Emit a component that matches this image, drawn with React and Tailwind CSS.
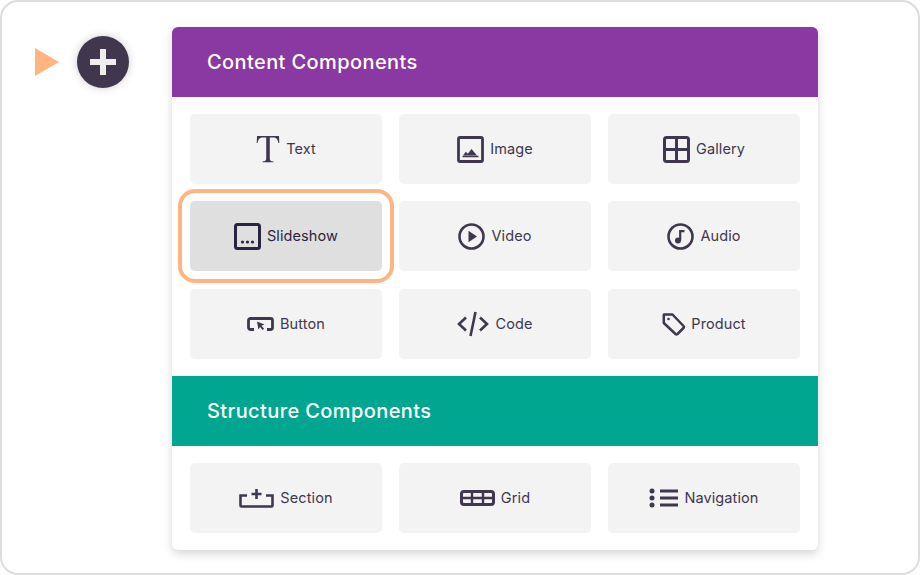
import React from "react";

const font = "font-['Inter','Noto_Sans',sans-serif]";
const stroke = { fill: "none", stroke: "currentColor", strokeWidth: 2.2 };

const icons = {
  text: (
    <svg width="24" height="28" viewBox="0 0 24 28">
      <path fill="currentColor" d="M1 1h22l.3 7h-.9c-.6-3.6-1.8-5.6-5.4-5.6h-3.2V23c0 2.6.7 3.2 3.6 3.4v.9H6.6v-.9c2.9-.2 3.6-.8 3.6-3.4V2.400H7c-3.600 0-4.800 2-5.400 5.600H.7z" />
    </svg>
  ),
  image: (
    <svg width="27" height="27" viewBox="0 0 27 27">
      <rect x="1.500" y="1.500" width="24" height="24" rx="1.500" {...stroke} strokeWidth="2.800" />
      <path fill="currentColor" d="M6 19.500l2.800-3.800 2 2 3.700-4.700 5.500 6.500z" />
      <path d="M5.500 20.500h16" {...stroke} strokeWidth="1.500" />
    </svg>
  ),
  gallery: (
    <svg width="27" height="27" viewBox="0 0 27 27">
      <rect x="1.500" y="1.500" width="24" height="24" rx="2" {...stroke} strokeWidth="3" />
      <path d="M13.500 1.500v24M1.500 13.500h24" {...stroke} strokeWidth="3" />
    </svg>
  ),
  slideshow: (
    <svg width="27" height="27" viewBox="0 0 27 27" className="text-[#2b2440]">
      <rect x="1.500" y="1.500" width="24" height="24" rx="2" {...stroke} strokeWidth="3" />
      <circle cx="8.500" cy="19" r="1.600" fill="currentColor" />
      <circle cx="13.500" cy="19" r="1.600" fill="currentColor" />
      <circle cx="18.500" cy="19" r="1.600" fill="currentColor" />
    </svg>
  ),
  video: (
    <svg width="27" height="27" viewBox="0 0 27 27">
      <circle cx="13.500" cy="13.500" r="12" {...stroke} strokeWidth="2.600" />
      <path fill="currentColor" d="M10.500 7.800l8.500 5.700-8.500 5.700z" />
    </svg>
  ),
  audio: (
    <svg width="27" height="27" viewBox="0 0 27 27">
      <circle cx="13.500" cy="13.500" r="12" {...stroke} strokeWidth="2.600" />
      <circle cx="11" cy="17.500" r="3" fill="currentColor" />
      <path d="M13.200 17.500V8.200h4.300" {...stroke} />
    </svg>
  ),
  button: (
    <svg width="27" height="14" viewBox="0 0 27 14">
      <path d="M7 12.500H3.500a2 2 0 0 1-2-2v-7a2 2 0 0 1 2-2h20a2 2 0 0 1 2 2v7a2 2 0 0 1-2 2H20" {...stroke} strokeWidth="2.800" />
      <path fill="currentColor" d="M10 4.500l7.500 3-3 1.200 2.600 3-1.500 1.300-2.500-3-1.700 2.500z" />
    </svg>
  ),
  code: (
    <svg width="32" height="26" viewBox="0 0 32 26">
      <path d="M9 6.500L2 13l7 6.500M23 6.500l7 6.500-7 6.500M18.500 1l-5 24" {...stroke} strokeWidth="2.600" />
    </svg>
  ),
  product: (
    <svg width="23" height="24" viewBox="0 0 23 24">
      <path d="M2 2.500h8.500L21.500 14a1.500 1.500 0 0 1 0 2l-6 6a1.500 1.500 0 0 1-2 0L1.800 11V3z" {...stroke} strokeWidth="2.500" strokeLinejoin="round" />
      <circle cx="6.500" cy="7" r="1.300" fill="currentColor" />
    </svg>
  ),
  section: (
    <svg width="35" height="20" viewBox="0 0 35 20">
      <path d="M8 7.500H1.500v10a1 1 0 0 0 1 1h30a1 1 0 0 0 1-1v-10H27" {...stroke} strokeWidth="2.600" />
      <path d="M17.500 1v10M12.500 6h10" {...stroke} strokeWidth="2.600" />
    </svg>
  ),
  grid: (
    <svg width="35" height="16" viewBox="0 0 35 16">
      <rect x="1.500" y="1.500" width="32" height="13" rx="2.500" {...stroke} strokeWidth="3" />
      <path d="M1.500 8h32M12 1.500v13M23 1.500v13" {...stroke} strokeWidth="2.400" />
    </svg>
  ),
  navigation: (
    <svg width="29" height="20" viewBox="0 0 29 20">
      <circle cx="3" cy="3" r="2.500" fill="currentColor" />
      <circle cx="3" cy="10" r="2.500" fill="currentColor" />
      <circle cx="3" cy="17" r="2.500" fill="currentColor" />
      <path d="M11 3h18M11 10h18M11 17h18" {...stroke} strokeWidth="3" />
    </svg>
  ),
};

function Tile({ label, icon, active }) {
  return (
    <div
      className={`h-[70px] rounded-[5px] flex items-center justify-center gap-[6px] ${
        active
          ? "bg-[#dfdfdf] text-[#2b2440] outline-[4px] outline-[#ffb582] outline-offset-[8px]"
          : "bg-[#f3f3f3] text-[#40374f]"
      }`}
    >
      <span className="text-[#40374f] flex">{icons[icon]}</span>
      <span className="text-[14.500px] leading-none tracking-[0.1px]">{label}</span>
    </div>
  );
}

function Header({ title, color }) {
  return (
    <div className={`h-[70px] flex items-center pl-[35px] text-white text-[20px] font-medium tracking-[0.4px] ${color}`}>
      {title}
    </div>
  );
}

export default function App() {
  return (
    <div className={`w-[920px] h-[575px] bg-white border-2 border-[#dddddd] rounded-[18px] flex overflow-hidden ${font}`}>
      <div className="w-[170px] shrink-0 pl-[33px] pt-[34px] flex items-start gap-[18px]">
        <div className="mt-[12px] w-0 h-0 border-y-[14px] border-y-transparent border-l-[24px] border-l-[#ffb582]" />
        <div className="w-[52px] h-[52px] rounded-full bg-[#40374f] shadow-[0_0_8px_rgba(0,0,0,0.2)] flex items-center justify-center">
          <svg width="26" height="26" viewBox="0 0 26 26">
            <path d="M13 0v26M0 13h26" fill="none" stroke="#eeeeee" strokeWidth="6" />
          </svg>
        </div>
      </div>
      <div className="w-[646px] h-[523px] mt-[25px] bg-white rounded-[6px] overflow-hidden shadow-[0_4px_10px_rgba(0,0,0,0.16)]">
        <Header title="Content Components" color="bg-[#8a38a2]" />
        <div className="grid grid-cols-3 gap-x-[17px] gap-y-[17.400px] px-[18px] py-[17px]">
          <Tile label="Text" icon="text" />
          <Tile label="Image" icon="image" />
          <Tile label="Gallery" icon="gallery" />
          <Tile label="Slideshow" icon="slideshow" active />
          <Tile label="Video" icon="video" />
          <Tile label="Audio" icon="audio" />
          <Tile label="Button" icon="button" />
          <Tile label="Code" icon="code" />
          <Tile label="Product" icon="product" />
        </div>
        <Header title="Structure Components" color="bg-[#00a690]" />
        <div className="grid grid-cols-3 gap-x-[17px] px-[18px] py-[17px]">
          <Tile label="Section" icon="section" />
          <Tile label="Grid" icon="grid" />
          <Tile label="Navigation" icon="navigation" />
        </div>
      </div>
    </div>
  );
}
